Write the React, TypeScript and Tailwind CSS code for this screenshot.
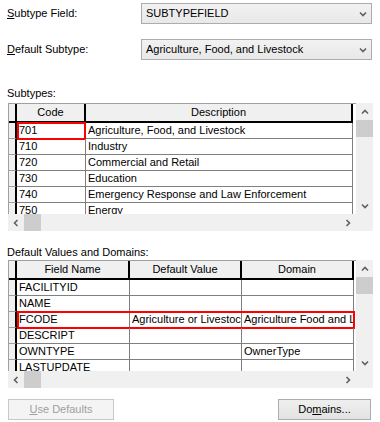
import React from "react";

const font = { fontFamily: '"Liberation Sans", Arial, sans-serif' };

function Chevron({ dir }: { dir: "up" | "down" | "left" | "right" }) {
  const paths: Record<string, string> = {
    down: "M1 1 L4 4 L7 1",
    up: "M1 4 L4 1 L7 4",
    left: "M4 1 L1 4 L4 7",
    right: "M1 1 L4 4 L1 7",
  };
  const horiz = dir === "left" || dir === "right";
  return (
    <svg width={horiz ? 6 : 8} height={horiz ? 8 : 6} viewBox={horiz ? "0 0 5 8" : "0 0 8 5"}>
      <path d={paths[dir]} fill="none" stroke="#606060" strokeWidth="1.6" />
    </svg>
  );
}

function Combo({ text }: { text: string }) {
  return (
    <div className="h-[21px] w-[231px] flex items-center justify-between border border-[#acacac] bg-gradient-to-b from-[#f2f2f2] to-[#e8e8e8] pl-[4px] pr-[4px] text-[11px] text-black">
      <span>{text}</span>
      <Chevron dir="down" />
    </div>
  );
}

type Col = { w: number; title: string };

function Grid({
  cols,
  rows,
  redRow,
  redCellOnly,
}: {
  cols: Col[];
  rows: string[][];
  redRow: number;
  redCellOnly: boolean;
}) {
  return (
    <div className="ml-[8px] flex w-[365px] h-[128px]">
      <div className="flex flex-col w-[348px]">
        <div className="flex flex-col h-[111px] overflow-hidden bg-white border-l border-t border-[#a0a0a0]">
          {/* header */}
          <div className="flex h-[19px] shrink-0">
            <div className="w-[8px] h-[19px] bg-[#f0f0f0] border-r-2 border-b-2 border-black" />
            {cols.map((c, i) => (
              <div
                key={i}
                style={{ width: c.w }}
                className="h-[19px] bg-[#f0f0f0] border-r-2 border-b-2 border-black flex items-center justify-center text-[11px] text-black"
              >
                {c.title}
              </div>
            ))}
          </div>
          {rows.map((r, ri) => (
            <div key={ri} className="flex h-[16px] shrink-0 relative">
              <div className="w-[8px] h-[16px] bg-[#f0f0f0] border-r-2 border-b border-r-black border-b-[#a0a0a0]" />
              {cols.map((c, i) => (
                <div
                  key={i}
                  style={{ width: c.w }}
                  className="h-[16px] border-r border-b border-[#808080] pl-[2px] text-[11px] leading-[15px] text-black whitespace-nowrap overflow-hidden"
                >
                  {r[i]}
                </div>
              ))}
              {ri === redRow && (
                <div
                  style={{ width: redCellOnly ? cols[0].w : cols.reduce((a, c) => a + c.w, 0) + 1 }}
                  className="absolute left-[8px] top-[-1px] h-[18px] border-2 border-[#ff0000]"
                />
              )}
            </div>
          ))}
        </div>
        <div className="h-[17px] bg-[#f0f0f0] flex items-center">
          <div className="w-[16px] flex justify-center"><Chevron dir="left" /></div>
          <div className="w-[17px] h-[17px] bg-[#cdcdcd]" />
          <div className="flex-1" />
          <div className="w-[17px] flex justify-center"><Chevron dir="right" /></div>
        </div>
      </div>
      <div className="w-[17px] h-[128px] bg-[#f0f0f0] flex flex-col">
        <div className="h-[17px] flex items-center justify-center"><Chevron dir="up" /></div>
        <div className="h-[17px] bg-[#cdcdcd]" />
        <div className="flex-1" />
        <div className="h-[17px] flex items-center justify-center"><Chevron dir="down" /></div>
        <div className="h-[17px]" />
      </div>
    </div>
  );
}

export default function App() {
  return (
    <div style={font} className="w-[380px] h-[422px] bg-white text-[11px] text-black relative overflow-hidden">
      <div className="pt-[3px] flex items-center">
        <div className="w-[141px] pl-[7px]"><span className="underline">S</span>ubtype Field:</div>
        <Combo text="SUBTYPEFIELD" />
      </div>
      <div className="mt-[15px] flex items-center">
        <div className="w-[141px] pl-[7px]"><span className="underline">D</span>efault Subtype:</div>
        <Combo text="Agriculture, Food, and Livestock" />
      </div>
      <div className="mt-[27px] pl-[7px] h-[13px] leading-[13px]">Subtypes:</div>
      <div className="mt-[3px]">
        <Grid
          cols={[
            { w: 69, title: "Code" },
            { w: 267, title: "Description" },
          ]}
          rows={[
            ["701", "Agriculture, Food, and Livestock"],
            ["710", "Industry"],
            ["720", "Commercial and Retail"],
            ["730", "Education"],
            ["740", "Emergency Response and Law Enforcement"],
            ["750", "Energy"],
          ]}
          redRow={0}
          redCellOnly={true}
        />
      </div>
      <div className="mt-[15px] pl-[7px] h-[13px] leading-[13px]">Default Values and Domains:</div>
      <div className="mt-[1px]">
        <Grid
          cols={[
            { w: 113, title: "Field Name" },
            { w: 112, title: "Default Value" },
            { w: 112, title: "Domain" },
          ]}
          rows={[
            ["FACILITYID", "", ""],
            ["NAME", "", ""],
            ["FCODE", "Agriculture or Livestock", "Agriculture Food and Livestock"],
            ["DESCRIPT", "", ""],
            ["OWNTYPE", "", "OwnerType"],
            ["LASTUPDATE", "", ""],
          ]}
          redRow={2}
          redCellOnly={false}
        />
      </div>
      <div className="mt-[11px] flex justify-between pl-[8px] pr-[9px]">
        <div className="w-[106px] h-[21px] border border-[#c8c8c8] bg-[#f4f4f4] flex items-center justify-center text-[#a0a0a0]">
          <span><span className="underline">U</span>se Defaults</span>
        </div>
        <div className="w-[93px] h-[21px] border border-[#acacac] bg-gradient-to-b from-[#efefef] to-[#e3e3e3] flex items-center justify-center">
          <span>Do<span className="underline">m</span>ains...</span>
        </div>
      </div>
    </div>
  );
}
